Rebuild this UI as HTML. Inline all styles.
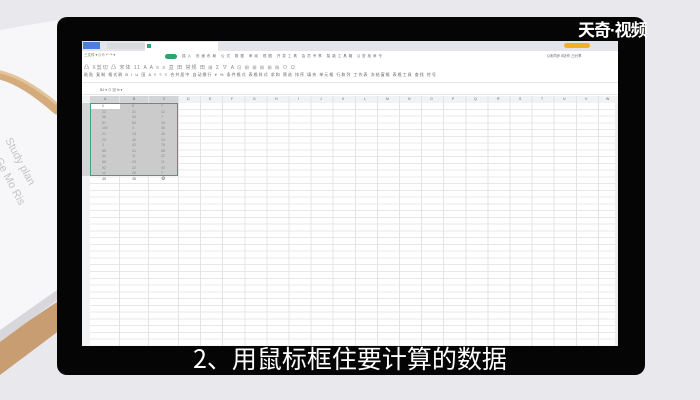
<!DOCTYPE html>
<html><head><meta charset="utf-8"><style>
*{margin:0;padding:0;box-sizing:border-box}
body{width:700px;height:400px;overflow:hidden;background:#e9e8ed;position:relative;font-family:"Liberation Sans","Noto Sans CJK SC",sans-serif}
.a{position:absolute}
.t{position:absolute;font-size:3.5px;color:#666;white-space:nowrap}
</style></head><body>
<!-- desk items -->
<svg class="a" style="left:0;top:0" width="70" height="400">
  <polygon points="0,340 60,300 60,330 0,375" fill="#c99d72"/>
  <polygon points="0,330 57,288 57,300 0,342" fill="#d8d8dc"/>
  <polygon points="0,30 57,20 57,290 0,330" fill="#f7f7f9"/>
  <path d="M0,75 C20,80 40,95 57,110" stroke="#d3ab7c" stroke-width="9" fill="none" stroke-linecap="round"/>
  <path d="M0,72 C20,76 40,90 57,104" stroke="#e4c59a" stroke-width="3" fill="none"/>
  <text x="5" y="140" transform="rotate(62 5 140)" font-size="11" fill="#c4c4c8" font-family="Liberation Sans">Study plan</text>
  <text x="-5" y="160" transform="rotate(62 -5 160)" font-size="11" fill="#c4c4c8" font-family="Liberation Sans">Ge Mo Ris</text>
</svg>
<!-- monitor -->
<div class="a" style="left:57px;top:17px;width:588px;height:358px;background:#050505;border-radius:10px"></div>
<div class="a" style="left:578px;top:16px;color:#fff;font-size:17px;font-weight:bold;letter-spacing:-1px">天奇·视频</div>
<!-- screen -->
<div class="a" style="left:82px;top:41px;width:536px;height:305px;background:#fff;overflow:hidden">
  <div class="a" style="left:0;top:0;width:536px;height:10px;background:#e3e5ea"></div>
  <div class="a" style="left:1px;top:1px;width:17px;height:7px;background:#4a7fe0"></div>
  <div class="a" style="left:25px;top:2px;width:40px;height:6px;background:#d8dade"></div>
  <div class="a" style="left:63px;top:1px;width:73px;height:9px;background:#fff"></div>
  <div class="a" style="left:65px;top:3px;width:4px;height:4px;background:#2fa36b"></div>
  <div class="a" style="left:482px;top:2px;width:26px;height:5px;background:#f0b020;border-radius:3px"></div>
  <div class="t" style="left:2px;top:12px">三文件 ▾ ⎙ ⎘ ↶ ↷ ▾</div>
  <div class="a" style="left:83px;top:13px;width:12px;height:5px;background:#2fa36b;border-radius:3px"></div>
  <div class="t" style="left:100px;top:13px;letter-spacing:2px">插入 页面布局 公式 数据 审阅 视图 开发工具 会员专享 智能工具箱 Q查找命令</div>
  <div class="t" style="left:465px;top:13px">Q未同步 8协作 凸分享</div>
  <div class="t" style="left:2px;top:23px;font-size:5px;color:#888;letter-spacing:1px">凸 X剪切 凸 宋体 11 A A ≡ ≡ 亘 田 常规 田 ⊞ Σ ∇ A ⊡ ⊞ ⊞ ⊞ ⊞ ⊞ ⊙ Ω</div>
  <div class="t" style="left:2px;top:31px;font-size:4px;letter-spacing:1px">粘贴 复制 格式刷 B I U 田 A ≡ ≡ ≡ 合并居中 自动换行 ¥ % 条件格式 表格样式 求和 筛选 排序 填充 单元格 行和列 工作表 冻结窗格 表格工具 查找 符号</div>
  <div class="a" style="left:0;top:41px;width:536px;height:1px;background:#e6e6e6"></div>
  <div class="t" style="left:18px;top:47px">B1 ▾ ⊙   ⊠ fx  ▾</div>
  <div class="a" style="left:0;top:53px;width:536px;height:1px;background:#e6e6e6"></div>
  <div class="a" style="left:0;top:55px;width:536px;height:7px;background:#f1f2f4"></div>
  <div class="a" style="left:8px;top:55px;width:88px;height:7px;background:#d2d4d6"></div>
  <div class="t" style="left:22px;top:56px">A</div><div class="t" style="left:51px;top:56px">B</div><div class="t" style="left:81px;top:56px">C</div>
  <div class="t" style="left:0;top:56px;width:536px">
    <span class="t" style="left:105px">D</span><span class="t" style="left:127px">E</span><span class="t" style="left:149px">F</span><span class="t" style="left:171px">G</span><span class="t" style="left:193px">H</span><span class="t" style="left:216px">I</span><span class="t" style="left:238px">J</span><span class="t" style="left:260px">K</span><span class="t" style="left:282px">L</span><span class="t" style="left:304px">M</span><span class="t" style="left:326px">N</span><span class="t" style="left:348px">O</span><span class="t" style="left:370px">P</span><span class="t" style="left:392px">Q</span><span class="t" style="left:415px">R</span><span class="t" style="left:437px">S</span><span class="t" style="left:459px">T</span><span class="t" style="left:481px">U</span><span class="t" style="left:503px">V</span><span class="t" style="left:524px">W</span>
  </div>
  <div class="a" style="left:0;top:62px;width:8px;height:243px;background:#f1f2f4"></div>
  <div class="a" style="left:0;top:62px;width:8px;height:73px;background:#d2d4d6"></div>
  <div class="a" style="left:8px;top:62px;width:528px;height:243px;background:repeating-linear-gradient(to bottom,transparent 0,transparent 5.76px,#e8e8e8 5.76px,#e8e8e8 6.76px)"></div>
  <div class="a" style="left:96px;top:55px;width:440px;height:250px;background:repeating-linear-gradient(to right,#e4e4e4 0,#e4e4e4 1px,transparent 1px,transparent 22.1px)"></div>
  <div class="a" style="left:37px;top:55px;width:1px;height:250px;background:#e4e4e4"></div>
  <div class="a" style="left:66px;top:55px;width:1px;height:250px;background:#e4e4e4"></div>
  <div class="a" style="left:8px;top:62px;width:88px;height:73px;background:#cbcbcb;border:1px solid #3aa57c"></div>
  <div class="a" style="left:9px;top:63px;width:29px;height:5px;background:#fff"></div>
  <div class="t" style="left:20px;top:63px;line-height:5.6px;color:#888">6<br>22<br>36<br>57<br>100<br>21<br>23<br>3<br>85<br>44<br>66<br>92<br>12</div>
  <div class="t" style="left:50px;top:63px;line-height:5.6px;color:#888">8<br>21<br>34<br>63<br>3<br>13<br>40<br>42<br>41<br>11<br>23<br>22<br>28</div>
  <div class="t" style="left:79px;top:63px;line-height:5.6px;color:#888">7<br>12<br>7<br>34<br>56<br>45<br>19<br>78<br>68<br>22<br>11<br>43<br>7</div>
  <div class="t" style="left:20px;top:136px">45</div><div class="t" style="left:50px;top:136px">45</div><div class="t" style="left:79px;top:135px;font-size:5px">⚙</div>
  <div class="a" style="left:533px;top:62px;width:3px;height:243px;background:#eee"></div>
</div>
<div class="a" style="left:0;top:341px;width:700px;line-height:34px;text-align:center;color:#fff;font-size:25px;font-family:'Noto Sans CJK SC',sans-serif">2、用鼠标框住要计算的数据</div>
</body></html>
